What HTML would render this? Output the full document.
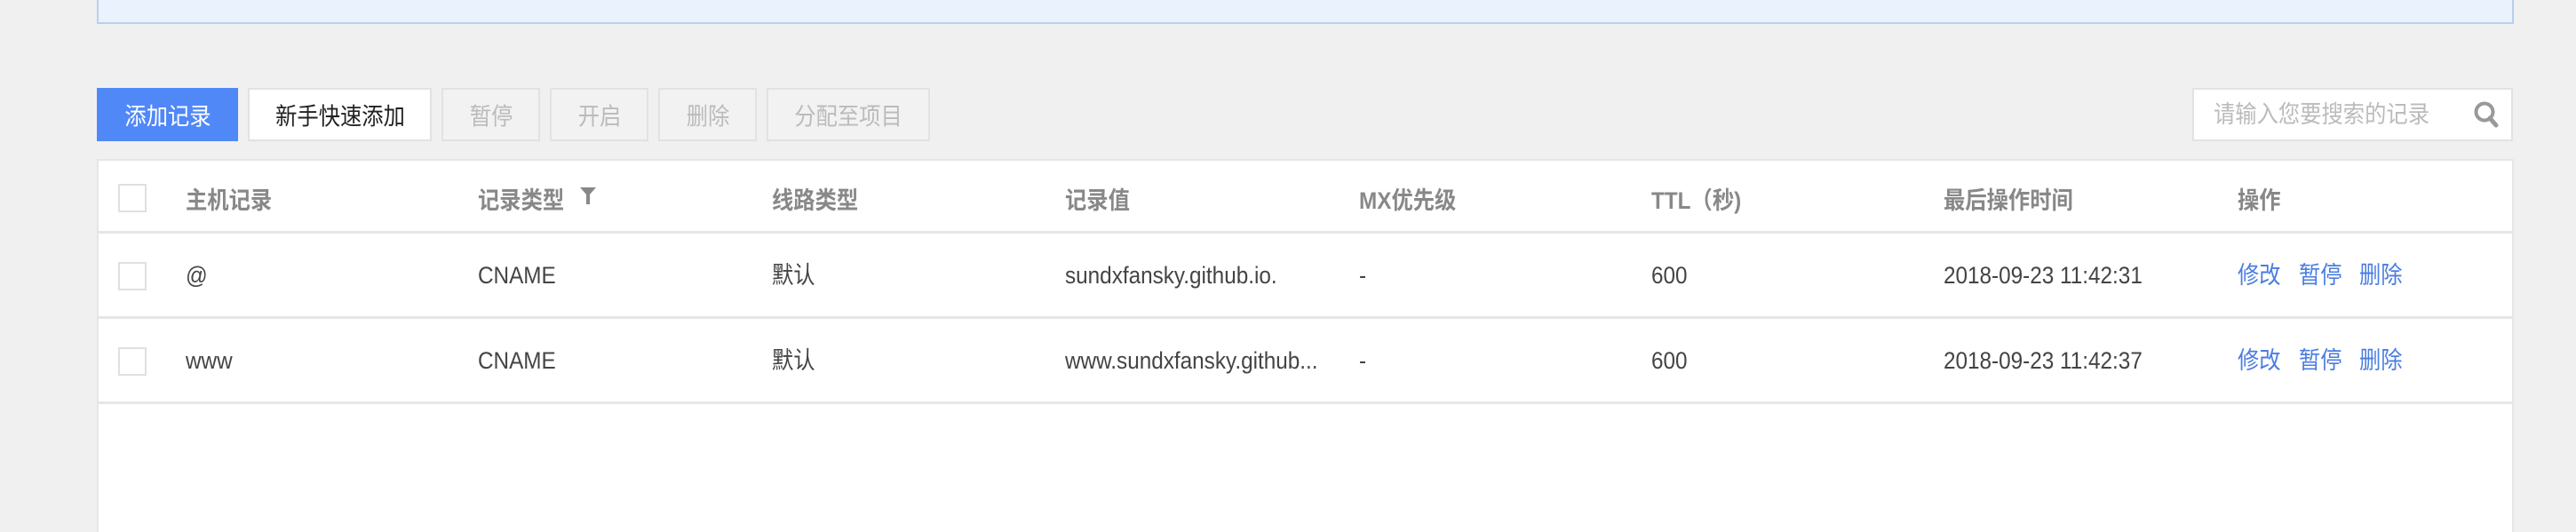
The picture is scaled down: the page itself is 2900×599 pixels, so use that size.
<!DOCTYPE html>
<html><head><meta charset="utf-8"><style>
*{margin:0;padding:0;box-sizing:border-box}
body{width:2900px;height:579px;background:#f0f0f0;position:relative;overflow:hidden;font-family:"Liberation Sans","Noto Sans CJK SC",sans-serif}
.a{position:absolute}
.t{position:absolute;display:inline-block;white-space:nowrap;transform:scaleX(.9);transform-origin:left center;line-height:1}
.btn{position:absolute;top:99px;height:60px;border:2px solid #e2e2e2;background:#f2f2f2;color:#bbb;font-size:27px}
.btn span{position:absolute;left:50%;top:50%;transform:translate(-50%,-50%) scaleX(.9);white-space:nowrap}
.hd{color:#888;font-weight:bold;font-size:27px}
.v{color:#444;font-size:27px}
.lk{color:#4a7de0;font-size:27px}
.cb{position:absolute;left:133px;width:32px;height:32px;border:2px solid #e0e0e0;background:#fff}
.ln{position:absolute;left:109px;width:2719px;height:3px;background:#e6e6e6}
</style></head><body>
<div class="a" style="left:109px;top:-4px;width:2721px;height:31px;background:#eaf2fd;border:2px solid #b8cff0"></div>

<div class="btn" style="left:109px;width:159px;background:#5188f8;border-color:#5188f8;color:#fff"><span>添加记录</span></div>
<div class="btn" style="left:279px;width:207px;background:#fff;color:#222"><span>新手快速添加</span></div>
<div class="btn" style="left:497px;width:111px"><span>暂停</span></div>
<div class="btn" style="left:619px;width:111px"><span>开启</span></div>
<div class="btn" style="left:741px;width:111px"><span>删除</span></div>
<div class="btn" style="left:863px;width:184px"><span>分配至项目</span></div>

<div class="a" style="left:2468px;top:99px;width:361px;height:60px;background:#fff;border:2px solid #e2e2e2"></div>
<div class="t" style="left:2492px;top:116px;font-size:27px;color:#bbb">请输入您要搜索的记录</div>
<svg class="a" style="left:2784px;top:113px" width="30" height="32" viewBox="0 0 30 32"><circle cx="13" cy="13" r="9.5" fill="none" stroke="#999" stroke-width="4"/><path d="M19 20 L26 28" stroke="#999" stroke-width="5" stroke-linecap="round"/></svg>

<div class="a" style="left:109px;top:179px;width:2721px;height:420px;background:#fff;border:2px solid #e6e6e6;border-bottom:none"></div>
<div class="ln" style="top:260px"></div>
<div class="ln" style="top:356px"></div>
<div class="ln" style="top:452px"></div>

<div class="cb" style="top:207px"></div>
<div class="cb" style="top:295px"></div>
<div class="cb" style="top:391px"></div>

<div class="t hd" style="left:209px;top:213px">主机记录</div>
<div class="t hd" style="left:538px;top:213px">记录类型</div>
<svg class="a" style="left:652px;top:210px" width="20" height="22" viewBox="0 0 20 22"><path d="M1 1 H19 L12 9 V20 H8 V9 Z" fill="#888"/></svg>
<div class="t hd" style="left:869px;top:213px">线路类型</div>
<div class="t hd" style="left:1199px;top:213px">记录值</div>
<div class="t hd" style="left:1530px;top:213px">MX优先级</div>
<div class="t hd" style="left:1859px;top:213px">TTL（秒)</div>
<div class="t hd" style="left:2188px;top:213px">最后操作时间</div>
<div class="t hd" style="left:2519px;top:213px">操作</div>

<div class="t v" style="left:209px;top:297px">@</div>
<div class="t v" style="left:538px;top:297px">CNAME</div>
<div class="t v" style="left:869px;top:297px">默认</div>
<div class="t v" style="left:1199px;top:297px">sundxfansky.github.io.</div>
<div class="t v" style="left:1530px;top:297px">-</div>
<div class="t v" style="left:1859px;top:297px">600</div>
<div class="t v" style="left:2188px;top:297px">2018-09-23 11:42:31</div>
<div class="t lk" style="left:2519px;top:297px">修改</div>
<div class="t lk" style="left:2588px;top:297px">暂停</div>
<div class="t lk" style="left:2656px;top:297px">删除</div>

<div class="t v" style="left:209px;top:393px">www</div>
<div class="t v" style="left:538px;top:393px">CNAME</div>
<div class="t v" style="left:869px;top:393px">默认</div>
<div class="t v" style="left:1199px;top:393px">www.sundxfansky.github...</div>
<div class="t v" style="left:1530px;top:393px">-</div>
<div class="t v" style="left:1859px;top:393px">600</div>
<div class="t v" style="left:2188px;top:393px">2018-09-23 11:42:37</div>
<div class="t lk" style="left:2519px;top:393px">修改</div>
<div class="t lk" style="left:2588px;top:393px">暂停</div>
<div class="t lk" style="left:2656px;top:393px">删除</div>
</body></html>
